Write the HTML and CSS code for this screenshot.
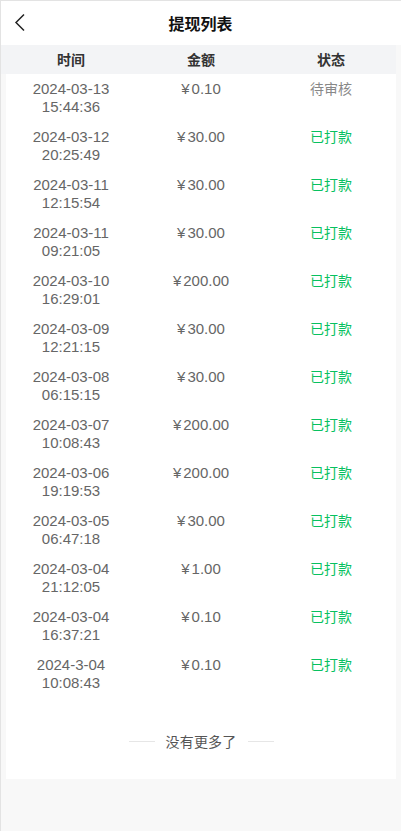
FILE: index.html
```html
<!DOCTYPE html>
<html lang="zh">
<head>
<meta charset="utf-8">
<title>提现列表</title>
<link rel="stylesheet" href="styles.css">
</head>
<body>
<div class="page">
  <header class="nav">
    <span class="back">
      <svg width="12" height="19" viewBox="0 0 12 19"><polyline points="10,1.5 2,9.5 10,17.5" fill="none" stroke="#222" stroke-width="1.5"/></svg>
    </span>
    <h1 class="title">提现列表</h1>
  </header>
  <div class="thead">
    <div class="th">时间</div>
    <div class="th">金额</div>
    <div class="th">状态</div>
  </div>
  <div class="card">
    <div class="row"><div class="time">2024-03-13<br>15:44:36</div><div class="amt"><span class="yen">¥</span>0.10</div><div class="st pending">待审核</div></div>
    <div class="row"><div class="time">2024-03-12<br>20:25:49</div><div class="amt"><span class="yen">¥</span>30.00</div><div class="st paid">已打款</div></div>
    <div class="row"><div class="time">2024-03-11<br>12:15:54</div><div class="amt"><span class="yen">¥</span>30.00</div><div class="st paid">已打款</div></div>
    <div class="row"><div class="time">2024-03-11<br>09:21:05</div><div class="amt"><span class="yen">¥</span>30.00</div><div class="st paid">已打款</div></div>
    <div class="row"><div class="time">2024-03-10<br>16:29:01</div><div class="amt"><span class="yen">¥</span>200.00</div><div class="st paid">已打款</div></div>
    <div class="row"><div class="time">2024-03-09<br>12:21:15</div><div class="amt"><span class="yen">¥</span>30.00</div><div class="st paid">已打款</div></div>
    <div class="row"><div class="time">2024-03-08<br>06:15:15</div><div class="amt"><span class="yen">¥</span>30.00</div><div class="st paid">已打款</div></div>
    <div class="row"><div class="time">2024-03-07<br>10:08:43</div><div class="amt"><span class="yen">¥</span>200.00</div><div class="st paid">已打款</div></div>
    <div class="row"><div class="time">2024-03-06<br>19:19:53</div><div class="amt"><span class="yen">¥</span>200.00</div><div class="st paid">已打款</div></div>
    <div class="row"><div class="time">2024-03-05<br>06:47:18</div><div class="amt"><span class="yen">¥</span>30.00</div><div class="st paid">已打款</div></div>
    <div class="row"><div class="time">2024-03-04<br>21:12:05</div><div class="amt"><span class="yen">¥</span>1.00</div><div class="st paid">已打款</div></div>
    <div class="row"><div class="time">2024-03-04<br>16:37:21</div><div class="amt"><span class="yen">¥</span>0.10</div><div class="st paid">已打款</div></div>
    <div class="row"><div class="time">2024-3-04<br>10:08:43</div><div class="amt"><span class="yen">¥</span>0.10</div><div class="st paid">已打款</div></div>
    <div class="nomore"><span class="line"></span><span class="nm-text">没有更多了</span><span class="line"></span></div>
  </div>
</div>
</body>
</html>
```
FILE: styles.css
```css
html, body {
  margin: 0;
  padding: 0;
}
body {
  background: #f8f8f8;
  font-family: "Liberation Sans", "Noto Sans CJK SC", sans-serif;
  height: 831px;
  box-sizing: border-box;
  border-top: 1px solid #e3e3e3;
  border-left: 1px solid #e3e3e3;
}
.page {
  display: flex;
  flex-direction: column;
}
.nav {
  height: 44px;
  background: #fff;
  display: flex;
  align-items: center;
  justify-content: center;
  position: relative;
}
.back {
  position: absolute;
  left: 13px;
  top: 12px;
  display: flex;
}
.title {
  margin: 0;
  font-size: 16px;
  font-weight: bold;
  color: #111;
  font-family: "Noto Sans CJK SC", sans-serif;
  line-height: 20px;
  margin-left: -1px;
}
.thead {
  margin-right: 5px;
  height: 29px;
  background: #f3f4f6;
  display: grid;
  grid-template-columns: 5px 1fr 1fr 1fr;
}
.thead::before {
  content: "";
}
.th {
  font-family: "Noto Sans CJK SC", sans-serif;
  font-size: 14px;
  font-weight: bold;
  color: #333;
  text-align: center;
  line-height: 29px;
}
.card {
  margin: 0 5px 0 5px;
  background: #fff;
}
.row {
  display: grid;
  grid-template-columns: 1fr 1fr 1fr;
  padding: 6px 0;
}
.time, .amt {
  font-size: 15px;
  line-height: 18px;
  color: #666;
  text-align: center;
}
.yen {
  margin-right: 2px;
}
.st {
  font-family: "Noto Sans CJK SC", sans-serif;
  font-size: 14px;
  line-height: 14px;
  padding-top: 1px;
  text-align: center;
}
.pending { color: #888; }
.paid { color: #07c160; }
.nomore {
  display: flex;
  align-items: center;
  justify-content: center;
  gap: 11px;
  padding: 33px 0 28px;
}
.line {
  width: 26px;
  height: 1px;
  background: #e6e6e6;
}
.nm-text {
  font-family: "Noto Sans CJK SC", sans-serif;
  font-size: 14px;
  color: #555;
  line-height: 20px;
  letter-spacing: 0.2px;
}
```
